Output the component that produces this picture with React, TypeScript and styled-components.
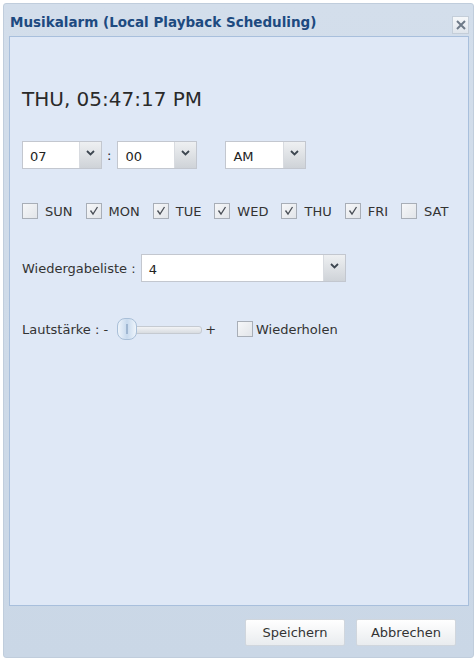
import React, { FC } from 'react'
import styled, { createGlobalStyle } from 'styled-components'

const GlobalStyle = createGlobalStyle`
  html, body {
    margin: 0;
    padding: 0;
    background: #ffffff;
  }
  body {
    font-family: 'DejaVu Sans', 'Noto Sans', sans-serif;
    font-size: 13px;
    color: #222;
  }
`

const days = [
  { label: 'SUN', checked: false },
  { label: 'MON', checked: true },
  { label: 'TUE', checked: true },
  { label: 'WED', checked: true },
  { label: 'THU', checked: true },
  { label: 'FRI', checked: true },
  { label: 'SAT', checked: false },
]

const Chevron: FC = () => (
  <svg width="9" height="6" viewBox="0 0 9 6">
    <path d="M1 1 L4.5 4.5 L8 1" fill="none" stroke="#3d4650" strokeWidth="1.8" />
  </svg>
)

const Check: FC = () => (
  <svg width="12" height="12" viewBox="0 0 12 12">
    <path d="M2.5 5.5 L5 9 L9.5 2" fill="none" stroke="#4a4f57" strokeWidth="1.3" />
  </svg>
)

interface ComboProps {
  value: string
  width: number
}

const Combo: FC<ComboProps> = ({ value, width }) => (
  <_Combo $width={width}>
    <ComboInput>{value}</ComboInput>
    <ComboTrigger>
      <Chevron />
    </ComboTrigger>
  </_Combo>
)

const CheckBox: FC<{ checked: boolean }> = ({ checked }) => (
  <_CheckBox>{checked && <Check />}</_CheckBox>
)

export default function App() {
  return (
    <>
      <GlobalStyle />
      <Window>
        <Header>
          <Title>Musikalarm (Local Playback Scheduling)</Title>
          <CloseButton>
            <svg width="10" height="10" viewBox="0 0 10 10">
              <path d="M1 1 L9 9 M9 1 L1 9" stroke="#6e7a88" strokeWidth="2" />
            </svg>
          </CloseButton>
        </Header>
        <Panel>
          <Clock>THU, 05:47:17 PM</Clock>
          <Row $mt={30}>
            <Combo value="07" width={80} />
            <Colon>:</Colon>
            <Combo value="00" width={80} />
            <Spacer />
            <Combo value="AM" width={81} />
          </Row>
          <DayRow>
            {days.map(d => (
              <Day key={d.label}>
                <CheckBox checked={d.checked} />
                <span>{d.label}</span>
              </Day>
            ))}
          </DayRow>
          <Row $mt={35}>
            <Label>Wiedergabeliste :</Label>
            <Combo value="4" width={205} />
          </Row>
          <Row $mt={36}>
            <Label>Lautstärke : -</Label>
            <Slider>
              <Track />
              <Thumb />
            </Slider>
            <Label>+</Label>
            <Repeat>
              <CheckBox checked={false} />
              <span>Wiederholen</span>
            </Repeat>
          </Row>
        </Panel>
        <Footer>
          <Button>Speichern</Button>
          <Button>Abbrechen</Button>
        </Footer>
      </Window>
    </>
  )
}

const Window = styled.div`
  box-sizing: border-box;
  margin: 3px 0 0 3px;
  width: 471px;
  height: 655px;
  background: linear-gradient(#d3deeb, #cad7e6);
  border: 1px solid #c0cddc;
  border-radius: 3px;
  display: flex;
  flex-direction: column;
`

const Header = styled.div`
  height: 32px;
  display: flex;
  align-items: center;
  justify-content: space-between;
  padding: 0 4px 0 6px;
`

const Title = styled.div`
  font-weight: 700;
  font-size: 13.5px;
  color: #1d4a80;
  margin-top: 3px;
`

const CloseButton = styled.div`
  box-sizing: border-box;
  width: 17px;
  height: 18px;
  margin-top: 10px;
  border: 1px solid #c4ced9;
  background: linear-gradient(#f6f8fa, #dfe5ec);
  display: flex;
  align-items: center;
  justify-content: center;
`

const Panel = styled.div`
  box-sizing: border-box;
  height: 570px;
  margin: 0 4px 0 5px;
  padding: 50px 12px 0 12px;
  background: #dfe8f6;
  border: 1px solid #a8bfdc;
  display: flex;
  flex-direction: column;
`

const Clock = styled.div`
  font-size: 20px;
  line-height: 24px;
  color: #2a2a2a;
`

const Row = styled.div<{ $mt: number }>`
  display: flex;
  align-items: center;
  margin-top: ${({ $mt }) => $mt}px;
`

const _Combo = styled.div<{ $width: number }>`
  box-sizing: border-box;
  width: ${({ $width }) => $width}px;
  height: 28px;
  display: flex;
  border: 1px solid #c3c7cf;
  background: #ffffff;
`

const ComboInput = styled.div`
  flex: 1;
  display: flex;
  align-items: center;
  padding: 2px 0 0 7px;
  font-size: 13px;
  color: #222;
`

const ComboTrigger = styled.div`
  width: 22px;
  display: flex;
  align-items: flex-start;
  justify-content: center;
  padding-top: 8px;
  box-sizing: border-box;
  background: linear-gradient(#eef0f2, #cfd3d8);
  border-left: 1px solid #d8dbe0;
`

const Colon = styled.span`
  margin: 0 6px 0 5px;
  font-size: 13px;
`

const Spacer = styled.div`
  width: 28px;
`

const DayRow = styled.div`
  display: flex;
  align-items: center;
  gap: 13px;
  margin-top: 34px;
`

const Day = styled.label`
  display: flex;
  align-items: center;
  gap: 7px;
  font-size: 13px;
  color: #333;
`

const _CheckBox = styled.span`
  box-sizing: border-box;
  width: 16px;
  height: 16px;
  border: 1px solid #a8aeb7;
  background: linear-gradient(135deg, #f6f7f9, #e2e5e9);
  display: flex;
  align-items: center;
  justify-content: center;
`

const Label = styled.span`
  font-size: 13px;
  color: #333;
  white-space: pre;
  margin-right: 5px;
`

const Slider = styled.div`
  position: relative;
  width: 88px;
  height: 22px;
  margin-left: 1px;
  margin-right: 3px;
`

const Track = styled.div`
  position: absolute;
  left: 4px;
  right: 0;
  top: 8px;
  height: 6px;
  border-radius: 3px;
  border: 1px solid #c5cad1;
  background: linear-gradient(#f2f3f5, #d8dce1);
`

const Thumb = styled.div`
  position: absolute;
  left: 3px;
  top: 0;
  box-sizing: border-box;
  width: 20px;
  height: 22px;
  border-radius: 8px;
  border: 1px solid #a9bfd8;
  background: linear-gradient(90deg, #eef4fb, #c8daee 50%, #eef4fb);
  &::after {
    content: '';
    position: absolute;
    left: 8px;
    top: 5px;
    width: 2px;
    height: 10px;
    background: #9fb6d1;
  }
`

const Repeat = styled.label`
  display: flex;
  align-items: center;
  gap: 3px;
  margin-left: 16px;
  font-size: 13px;
  color: #333;
`

const Footer = styled.div`
  flex: 1;
  display: flex;
  justify-content: flex-end;
  align-items: flex-start;
  gap: 11px;
  padding: 13px 17px 0 0;
`

const Button = styled.button`
  box-sizing: border-box;
  width: 100px;
  height: 27px;
  border: 1px solid #d0d6dd;
  border-radius: 2px;
  background: linear-gradient(#ffffff, #e9ecef);
  font-family: 'DejaVu Sans', 'Noto Sans', sans-serif;
  font-size: 13px;
  color: #333;
  padding: 0;
`
